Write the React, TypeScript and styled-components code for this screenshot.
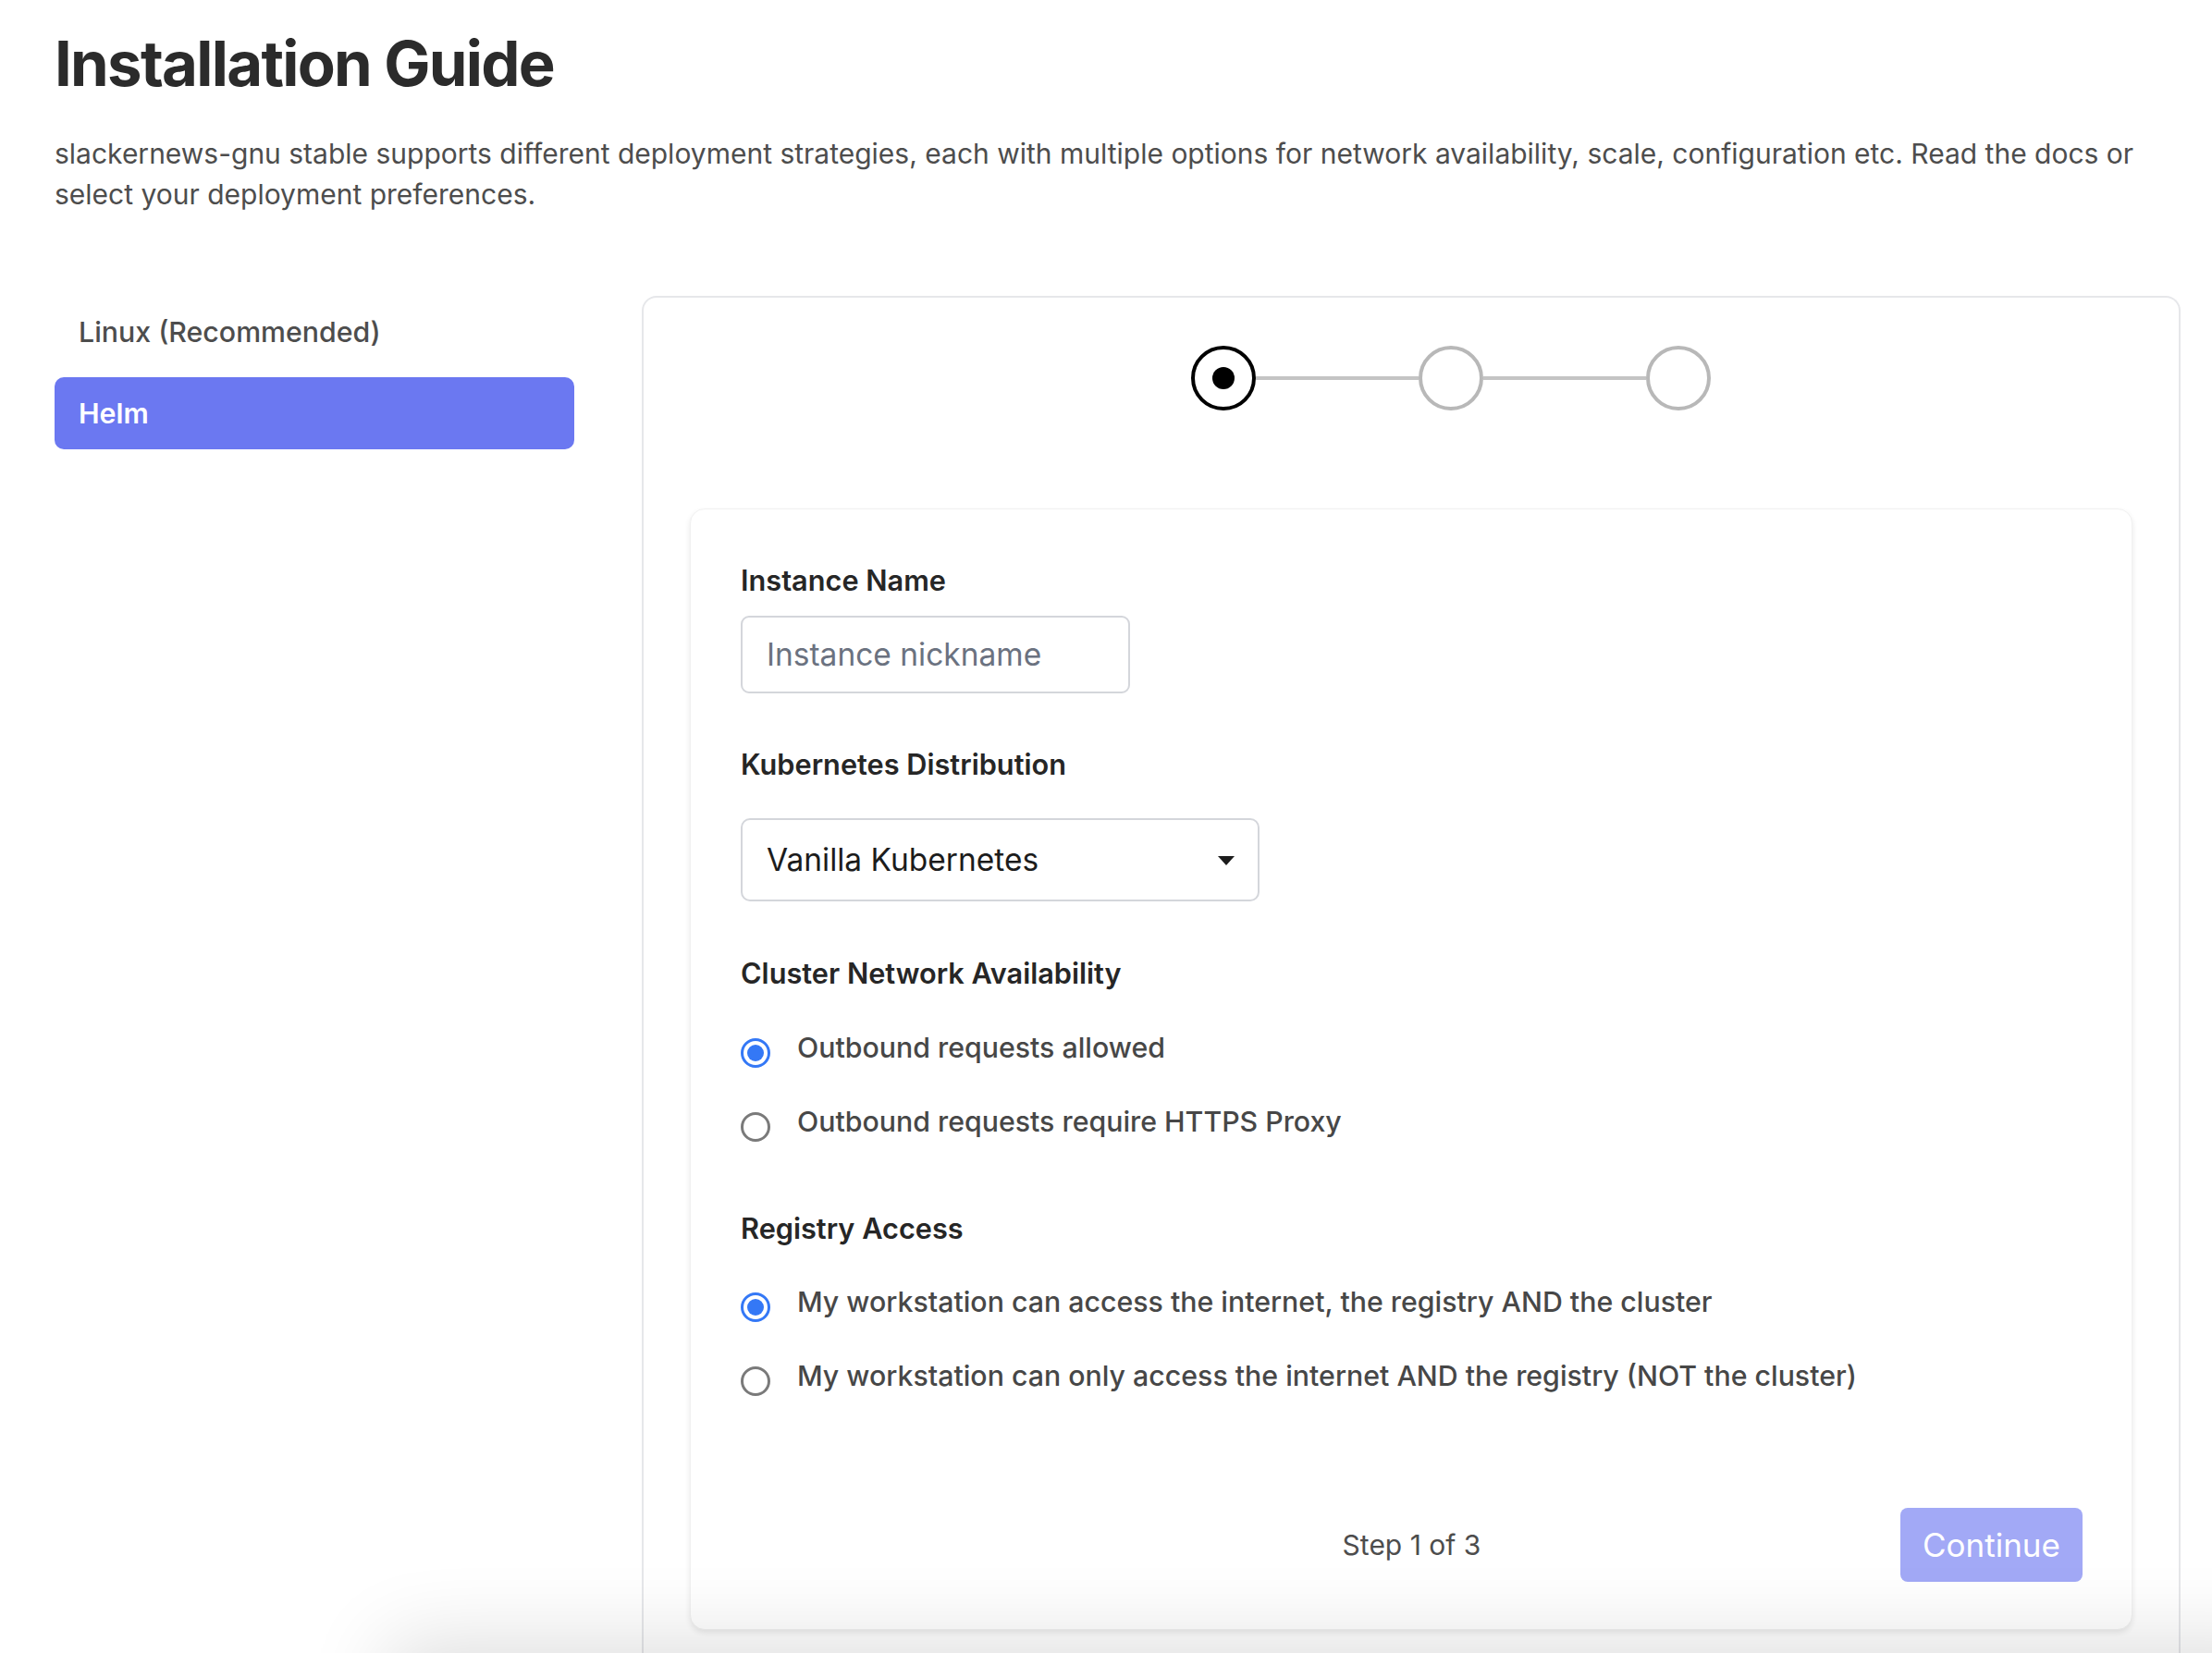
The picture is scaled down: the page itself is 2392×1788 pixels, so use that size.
import React from "react";
import styled, { createGlobalStyle } from "styled-components";

const GlobalStyle = createGlobalStyle`
  html, body {
    margin: 0;
    padding: 0;
    background: #ffffff;
  }
  body {
    font-family: Inter, "Noto Sans", "Liberation Sans", sans-serif;
    color: #2a2a2a;
    -webkit-font-smoothing: antialiased;
  }
  * { box-sizing: border-box; }
`;

const Page = styled.div`
  padding: 28px 34px 0 59px;
  min-height: 1788px;
`;

const Title = styled.h1`
  margin: 0;
  font-size: 67px;
  line-height: 82px;
  font-weight: 700;
  letter-spacing: -1.7px;
  color: #2b2b2b;
`;

const Intro = styled.p`
  margin: 34px 0 0;
  font-size: 30px;
  line-height: 44px;
  color: #4d4d4d;
  max-width: 2280px;
`;

const Layout = styled.div`
  display: grid;
  grid-template-columns: 562px 1fr;
  column-gap: 73px;
  margin-top: 88px;
  align-items: start;
`;

const Sidebar = styled.nav`
  display: flex;
  flex-direction: column;
  gap: 10px;
`;

const NavItem = styled.div<{ $active?: boolean }>`
  height: 78px;
  display: flex;
  align-items: center;
  padding-left: 26px;
  border-radius: 10px;
  font-size: 30.3px;
  font-weight: ${(p) => (p.$active ? 600 : 500)};
  color: ${(p) => (p.$active ? "#ffffff" : "#4d4d4d")};
  background: ${(p) => (p.$active ? "#6b78f1" : "transparent")};
`;

const Panel = styled.section`
  border: 2px solid #e6e7ea;
  border-bottom: none;
  border-radius: 16px 16px 0 0;
  padding: 52px 50px 120px;
  min-height: 1600px;
`;

const Stepper = styled.div`
  display: flex;
  align-items: center;
  justify-content: center;
  padding-left: 86px;
`;

const StepCircle = styled.div<{ $current?: boolean }>`
  width: 70px;
  height: 70px;
  border-radius: 50%;
  border: 4px solid ${(p) => (p.$current ? "#000000" : "#b8b8b8")};
  display: flex;
  align-items: center;
  justify-content: center;
  background: #fff;
`;

const StepDot = styled.div`
  width: 24px;
  height: 24px;
  border-radius: 50%;
  background: #000;
`;

const Connector = styled.div`
  width: 176px;
  height: 4px;
  background: #c4c4c4;
`;

const Card = styled.div`
  margin-top: 106px;
  border: 1px solid #f1f1f1;
  border-radius: 16px;
  box-shadow: 0 3px 6px rgba(0, 0, 0, 0.09);
  padding: 59px 53px 51px 54px;
  background: #fff;
`;

const FieldLabel = styled.div<{ $gap: number }>`
  font-size: 30.7px;
  line-height: 36px;
  font-weight: 600;
  color: #262626;
  margin-bottom: ${(p) => p.$gap}px;
`;

const Section = styled.div<{ $top: number }>`
  margin-top: ${(p) => p.$top}px;
`;

const TextInput = styled.input`
  display: block;
  width: 421px;
  height: 84px;
  border: 2px solid #d4d6db;
  border-radius: 9px;
  padding: 0 26px;
  font-family: inherit;
  font-size: 33.5px;
  color: #1f1f1f;
  outline: none;
  &::placeholder {
    color: #6b7280;
  }
`;

const SelectBox = styled.div`
  width: 561px;
  height: 90px;
  border: 2px solid #d4d6db;
  border-radius: 10px;
  padding: 0 25px 0 26px;
  display: flex;
  align-items: center;
  justify-content: space-between;
  font-size: 33.5px;
  color: #1c1c1c;
`;

const Caret = styled.span`
  width: 0;
  height: 0;
  border-left: 9px solid transparent;
  border-right: 9px solid transparent;
  border-top: 10px solid #1c1c1c;
  margin-top: 2px;
`;

const RadioList = styled.div`
  display: flex;
  flex-direction: column;
  gap: 36px;
`;

const RadioRow = styled.label`
  display: flex;
  align-items: flex-start;
  gap: 29px;
  font-size: 30.3px;
  line-height: 44px;
  color: #474747;
  font-weight: 500;
`;

const RadioMark = styled.span<{ $checked?: boolean }>`
  flex: none;
  width: 32px;
  height: 32px;
  margin-top: 12px;
  border-radius: 50%;
  border: 3px solid ${(p) => (p.$checked ? "#3478f6" : "#7a7a7a")};
  display: flex;
  align-items: center;
  justify-content: center;
  background: #fff;
  &::after {
    content: "";
    display: ${(p) => (p.$checked ? "block" : "none")};
    width: 18px;
    height: 18px;
    border-radius: 50%;
    background: #3478f6;
  }
`;

const Footer = styled.div`
  margin-top: 121px;
  display: grid;
  grid-template-columns: 1fr auto 1fr;
  align-items: center;
`;

const StepText = styled.div`
  grid-column: 2;
  font-size: 30px;
  color: #4d4d4d;
`;

const ContinueButton = styled.button`
  grid-column: 3;
  justify-self: end;
  width: 197px;
  height: 80px;
  border: none;
  border-radius: 8px;
  background: #a2a9f6;
  color: #fff;
  font-family: inherit;
  font-size: 35px;
`;

const BottomShade = styled.div`
  position: fixed;
  left: 420px;
  right: -100px;
  bottom: -120px;
  height: 120px;
  box-shadow: 0 -10px 90px rgba(0, 0, 0, 0.14);
  background: #e9e9e9;
  pointer-events: none;
`;

type Option = { label: string; checked?: boolean };

const network: Option[] = [
  { label: "Outbound requests allowed", checked: true },
  { label: "Outbound requests require HTTPS Proxy" },
];

const registry: Option[] = [
  { label: "My workstation can access the internet, the registry AND the cluster", checked: true },
  { label: "My workstation can only access the internet AND the registry (NOT the cluster)" },
];

function Radios({ options }: { options: Option[] }) {
  return (
    <RadioList>
      {options.map((o) => (
        <RadioRow key={o.label}>
          <RadioMark $checked={o.checked} />
          <span>{o.label}</span>
        </RadioRow>
      ))}
    </RadioList>
  );
}

export default function App() {
  return (
    <>
      <GlobalStyle />
      <Page>
        <Title>Installation Guide</Title>
        <Intro>
          slackernews-gnu stable supports different deployment strategies, each with multiple options for
          network availability, scale, configuration etc. Read the docs or select your deployment preferences.
        </Intro>
        <Layout>
          <Sidebar>
            <NavItem>Linux (Recommended)</NavItem>
            <NavItem $active>Helm</NavItem>
          </Sidebar>
          <Panel>
            <Stepper>
              <StepCircle $current>
                <StepDot />
              </StepCircle>
              <Connector />
              <StepCircle />
              <Connector />
              <StepCircle />
            </Stepper>
            <Card>
              <FieldLabel $gap={20}>Instance Name</FieldLabel>
              <TextInput placeholder="Instance nickname" />
              <Section $top={59}>
                <FieldLabel $gap={40}>Kubernetes Distribution</FieldLabel>
                <SelectBox>
                  <span>Vanilla Kubernetes</span>
                  <Caret />
                </SelectBox>
              </Section>
              <Section $top={60}>
                <FieldLabel $gap={40}>Cluster Network Availability</FieldLabel>
                <Radios options={network} />
              </Section>
              <Section $top={76}>
                <FieldLabel $gap={39}>Registry Access</FieldLabel>
                <Radios options={registry} />
              </Section>
              <Footer>
                <StepText>Step 1 of 3</StepText>
                <ContinueButton>Continue</ContinueButton>
              </Footer>
            </Card>
          </Panel>
        </Layout>
      </Page>
      <BottomShade />
    </>
  );
}
